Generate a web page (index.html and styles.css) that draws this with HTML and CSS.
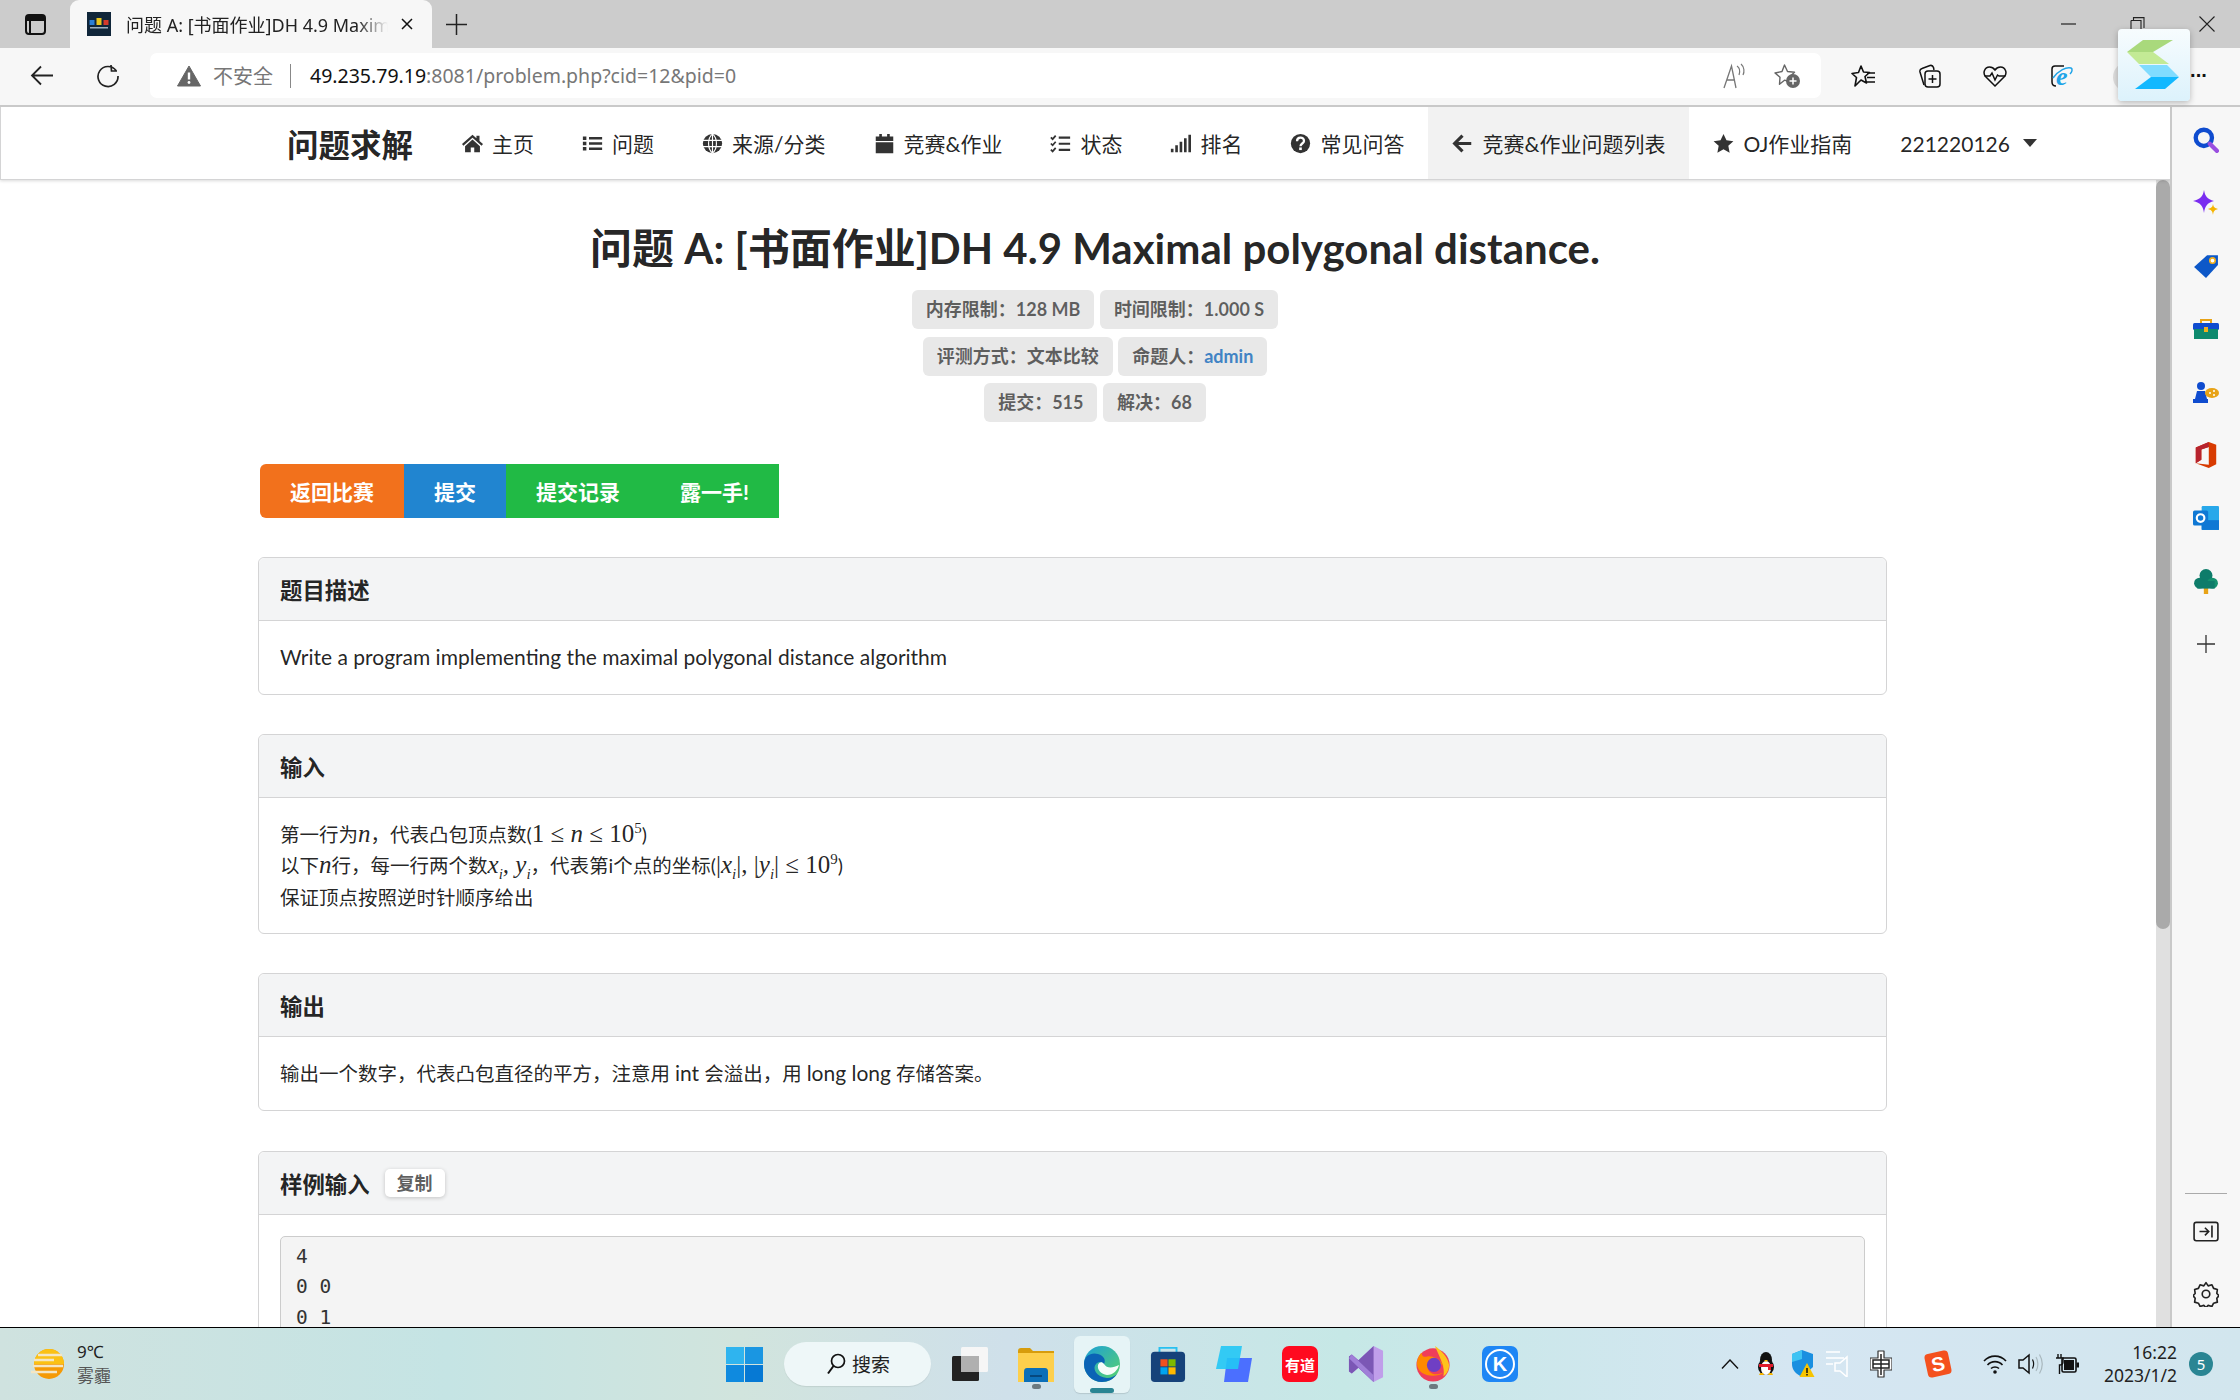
FILE: index.html
```html
<!DOCTYPE html>
<html lang="zh-CN">
<head>
<meta charset="utf-8">
<title>问题 A: [书面作业]DH 4.9 Maximal polygonal distance.</title>
<link rel="stylesheet" href="styles.css">
</head>
<body>
<div class="screen">
  <header class="tabstrip">
    <svg class="i tabs-ic" viewBox="0 0 21 21"><rect x="1" y="1" width="19" height="19" rx="3" fill="none" stroke="#111" stroke-width="2"/><path d="M1 6h19M5 6v14" stroke="#111" stroke-width="2" fill="none"/><rect x="1" y="1" width="19" height="5" fill="#111"/></svg>
    <div class="tab">
      <svg class="i favicon" viewBox="0 0 24 24"><rect width="24" height="24" fill="#10263a"/><rect x="2.500" y="8" width="5" height="5" fill="#2b7fd6"/><rect x="9.500" y="6" width="5" height="7" fill="#e8c51e"/><rect x="16.500" y="8" width="5" height="5" fill="#d63a2b"/><rect x="3" y="15" width="18" height="1.500" fill="#9fb1c0"/></svg>
      <span class="tab-title">问题 A: [书面作业]DH 4.9 Maximal polygonal distance.</span>
      <svg class="i tab-x" viewBox="0 0 12 12"><path d="M1 1l10 10M11 1 1 11" stroke="#111" stroke-width="1.500"/></svg>
    </div>
    <svg class="i tab-plus" viewBox="0 0 21 21"><path d="M10.500 0v21M0 10.500h21" stroke="#222" stroke-width="1.500"/></svg>
    <div class="winctl">
      <svg class="i win-min" viewBox="0 0 15 2"><path d="M0 1h15" stroke="#222" stroke-width="1.200"/></svg>
      <svg class="i win-max" viewBox="0 0 15 14"><path d="M1 3.500h10v10.500M1 3.500v10.500M3.500 3V.6h10.500V11" fill="none" stroke="#222" stroke-width="1.100"/></svg>
      <svg class="i win-x" viewBox="0 0 16 16"><path d="M.5.5l15 15M15.500.5l-15 15" stroke="#222" stroke-width="1.100"/></svg>
    </div>
  </header>

  <div class="toolbar">
    <svg class="i tb-back" viewBox="0 0 24 21"><path d="M23 10.500H2M11 1.500l-9 9 9 9" fill="none" stroke="#222" stroke-width="1.800"/></svg>
    <svg class="i tb-reload" viewBox="0 0 24 24"><path d="M20 6.500A10 10 0 1 0 22 12M15 1l.5 6H21" fill="none" stroke="#222" stroke-width="1.700"/></svg>
    <div class="addr">
      <svg class="i warn" viewBox="0 0 24 22"><path d="M12 1 23.500 21H.5z" fill="#666" stroke="#666" stroke-linejoin="round"/><path d="M12 7.500v7" stroke="#fff" stroke-width="2.400"/><circle cx="12" cy="17.500" r="1.400" fill="#fff"/></svg>
      <span class="insecure">不安全</span>
      <span class="addr-sep"></span>
      <span class="url"><span class="url-host">49.235.79.19</span>:8081/problem.php?cid=12&amp;pid=0</span>
      <svg class="i addr-read" viewBox="0 0 24 26"><path d="M2 25 9.500 3 14 25M5 17h8" fill="none" stroke="#777" stroke-width="1.300"/><path d="M15 3c3 2 3 6 2 9M19 1c3.500 3 3.500 8 2 11" fill="none" stroke="#777" stroke-width="1.200"/></svg>
      <svg class="i addr-fav" viewBox="0 0 26 25"><path d="M10.500 2l3 6.500 7 .8-5 4.700 1 5-6-1.800-5 4 .5-7L1 10l7-1.500z" fill="none" stroke="#666" stroke-width="1.400" stroke-linejoin="round"/><circle cx="19" cy="18" r="7" fill="#666"/><path d="M19 14.500v7M15.500 18h7" stroke="#fff" stroke-width="1.500"/></svg>
    </div>
    <svg class="i tb-favs" viewBox="0 0 25 24"><path d="M10 2l2.500 6 6 .5-4.500 4 1.500 6.500L10 16l-6 6 1.500-8.500L1 9.500l6.500-1z" fill="none" stroke="#111" stroke-width="1.600" stroke-linejoin="round"/><path d="M16 9h8M16 13.500h8M16 18h8" stroke="#111" stroke-width="1.500"/></svg>
    <svg class="i tb-coll" viewBox="0 0 24 24"><path d="M7 21 3 8c-.5-2 .5-3 2-3.500L13 1.500c2-.5 3 .5 3.500 2L17 6" fill="none" stroke="#111" stroke-width="1.500"/><rect x="8" y="7" width="15" height="16" rx="3" fill="#f7f7f7" stroke="#111" stroke-width="1.500"/><path d="M15.500 11v8M11.500 15h8" stroke="#111" stroke-width="1.500"/></svg>
    <svg class="i tb-heart" viewBox="0 0 24 22"><path d="M12 21 2.500 11.500C-.5 8 1.500 2 6.500 2c2.500 0 4.300 1.300 5.500 3 1.200-1.700 3-3 5.500-3 5 0 7 6 4 9.500z" fill="none" stroke="#111" stroke-width="1.500"/><path d="M1.500 11H7l2-3 3 7 2.500-5 1.500 1h6.500" fill="none" stroke="#111" stroke-width="1.500"/></svg>
    <svg class="i tb-ie" viewBox="0 0 24 24"><path d="M6 22c-3 0-4-1-4-4V5c0-2 1-3 3-3h9" fill="none" stroke="#111" stroke-width="1.500"/><text x="6" y="21" class="ie-e">e</text><path d="M3 14c6-8 13-11 18-10 2 1 1 4-1 6" fill="none" stroke="#20a4e8" stroke-width="1.500"/></svg>
    <span class="more">···</span>
    <span class="avatar"></span>
    <div class="ext-pop">
      <svg class="i ext-logo" viewBox="0 0 72 72"><polygon points="25,11 55,11 35,23 9,23" fill="#a9d97c"/><polygon points="9,23 35,23 51,35 21,35" fill="#c3ea95"/><polygon points="21,36 49,36 61,48 33,48" fill="#80dcff"/><polygon points="33,48 61,48 47,60 17,60" fill="#12b8ff"/></svg>
    </div>
  </div>

  <div class="main">
    <div class="viewport">
      <nav class="navbar">
        <a class="brand">问题求解</a>
        <a class="nav-item"><svg class="i nav-ic" viewBox="0 0 24 24"><path d="M12 2 0 12.500 1.600 14.500 12 5.500l10.400 9 1.600-2-4-3.500V3h-3.500v3z"/><path d="M12 7.500 3.500 15v7H10v-5.500h4V22h6.500v-7z"/></svg>主页</a>
        <a class="nav-item"><svg class="i nav-ic" viewBox="0 0 24 24"><path d="M1 4h4v4H1zM1 10h4v4H1zM1 16h4v4H1zM8 4.500h15v3H8zM8 10.500h15v3H8zM8 16.500h15v3H8z"/></svg>问题</a>
        <a class="nav-item"><svg class="i nav-ic" viewBox="0 0 24 24"><circle cx="12" cy="12" r="11"/><path d="M1 8.500h22M1 15.500h22M12 1v22M12 1C6 6 6 18 12 23M12 1c6 5 6 17 0 22" fill="none" stroke="#fff" stroke-width="1.300"/></svg>来源/分类</a>
        <a class="nav-item"><svg class="i nav-ic" viewBox="0 0 24 24"><path d="M6 1h3v3h6V1h3v3h4v5H2V4h4zM2 10.500h20V23H2z"/></svg>竞赛&amp;作业</a>
        <a class="nav-item"><svg class="i nav-ic" viewBox="0 0 24 24"><path d="M1 5l2 2 3.500-4M1 12l2 2 3.500-4M1 19l2 2 3.500-4" fill="none" stroke="#333" stroke-width="2"/><path d="M10 4h13v2.500H10zM10 11h13v2.500H10zM10 18h13v2.500H10z"/></svg>状态</a>
        <a class="nav-item"><svg class="i nav-ic" viewBox="0 0 24 24"><path d="M1 18h3v4H1zM6 14h3v8H6zM11 10h3v12h-3zM16 6h3v16h-3zM21 2h3v20h-3z"/></svg>排名</a>
        <a class="nav-item"><svg class="i nav-ic" viewBox="0 0 24 24"><circle cx="12" cy="12" r="11"/><path d="M8 9.500c0-5.500 8-5.500 8-.5 0 3-4 3-4 6" fill="none" stroke="#fff" stroke-width="2.600"/><rect x="10.500" y="16.500" width="3" height="3" fill="#fff"/></svg>常见问答</a>
        <a class="nav-item nav-active"><svg class="i nav-ic" viewBox="0 0 24 24"><path d="M22 12H4M12 3l-9 9 9 9" fill="none" stroke="#333" stroke-width="3.600"/></svg>竞赛&amp;作业问题列表</a>
        <a class="nav-item"><svg class="i nav-ic" viewBox="0 0 24 24"><path d="M12 1l3.400 7.300 7.900 1-5.800 5.400 1.500 7.900-7-3.900-7 3.900 1.500-7.900L.7 9.300l7.900-1z"/></svg>OJ作业指南</a>
        <a class="nav-item nav-user">221220126<span class="caret"></span></a>
      </nav>
      <div class="scrollarea">
        <main class="page">
          <div class="head">
            <h1 class="title">问题 A: [书面作业]DH 4.9 Maximal polygonal distance.</h1>
            <div class="label-row"><span class="label">内存限制：128 MB</span><span class="label">时间限制：1.000 S</span></div>
            <div class="label-row"><span class="label">评测方式：文本比较</span><span class="label">命题人：<a class="label-link">admin</a></span></div>
            <div class="label-row"><span class="label">提交：515</span><span class="label">解决：68</span></div>
          </div>
          <div class="btns">
            <a class="btn btn-orange">返回比赛</a><a class="btn btn-blue">提交</a><a class="btn btn-green">提交记录</a><a class="btn btn-green">露一手!</a>
          </div>
          <section class="panel">
            <h2 class="panel-head">题目描述</h2>
            <div class="panel-body"><span class="latin">Write a program implementing the maximal polygonal distance algorithm</span></div>
          </section>
          <section class="panel">
            <h2 class="panel-head">输入</h2>
            <div class="panel-body panel-lines">
              <div>第一行为<span class="m mi">n</span>，代表凸包顶点数(<span class="m">1 ≤ <span class="mi">n</span> ≤ 10<sup class="msup">5</sup></span>)</div>
              <div>以下<span class="m mi">n</span>行，每一行两个数<span class="m mi">x<sub class="msub">i</sub>, y<sub class="msub">i</sub></span>，代表第i个点的坐标(<span class="m">|<span class="mi">x<sub class="msub">i</sub></span>|, |<span class="mi">y<sub class="msub">i</sub></span>| ≤ 10<sup class="msup">9</sup></span>)</div>
              <div>保证顶点按照逆时针顺序给出</div>
            </div>
          </section>
          <section class="panel">
            <h2 class="panel-head">输出</h2>
            <div class="panel-body">输出一个数字，代表凸包直径的平方，注意用 <span class="latin">int</span> 会溢出，用 <span class="latin">long long</span> 存储答案。</div>
          </section>
          <section class="panel">
            <h2 class="panel-head">样例输入<span class="copy">复制</span></h2>
            <div class="panel-body"><pre class="code">4
0 0
0 1
1 1
1 0</pre></div>
          </section>
        </main>
        <div class="scrollbar"><div class="thumb"></div></div>
      </div>
    </div>
    <aside class="sidebar">
      <span class="side-cell"><svg class="i side-ic" viewBox="0 0 24 24"><circle cx="10" cy="10" r="7.500" fill="none" stroke="#0f4ccf" stroke-width="4"/><path d="M15.500 15.500 22 22" stroke="#9a4fe0" stroke-width="4" stroke-linecap="round"/></svg></span>
      <span class="side-cell"><svg class="i side-ic" viewBox="0 0 26 26"><path d="M11 0c1 6 3 9 10 11-7 2-9 5-10 12-1-7-3-10-11-12C8 9 10 6 11 0z" fill="#7a2cf0"/><path d="M20 14c.5 3 1.500 4 5 5-3.500 1-4.500 2-5 6-.5-4-1.500-5-5-6 3.500-1 4.500-2 5-5z" fill="#f5b400"/></svg></span>
      <span class="side-cell"><svg class="i side-ic" viewBox="0 0 24 24"><path d="M1 13 13 2h10v9L12 23z" fill="#0d58c8"/><circle cx="18" cy="7" r="2.500" fill="#fff" stroke="#f2b01e" stroke-width="1.500"/></svg></span>
      <span class="side-cell"><svg class="i side-ic" viewBox="0 0 26 20"><path d="M8 5V1h10v4" fill="none" stroke="#e8a317" stroke-width="2"/><rect y="4" width="26" height="7" rx="1.500" fill="#0f4ccf"/><rect x="1" y="10" width="24" height="10" fill="#0e8a6e"/><rect x="11" y="8" width="4" height="5" fill="#f2b01e"/></svg></span>
      <span class="side-cell"><svg class="i side-ic" viewBox="0 0 26 22"><circle cx="8" cy="5" r="4" fill="#0f4ccf"/><path d="M4 10h8l2 8H2zM0 18h15v4H0z" fill="#0f4ccf"/><ellipse cx="19" cy="12" rx="7" ry="5" fill="#e8a317"/><circle cx="17" cy="12" r="1" fill="#fff"/><circle cx="21" cy="10" r="1" fill="#fff"/><circle cx="21" cy="14" r="1" fill="#fff"/></svg></span>
      <span class="side-cell"><svg class="i side-ic" viewBox="0 0 24 28"><path d="M1 6 15 0l8 3v21l-8 4L1 23l14 1.500V5.500L7 8v11l-6 4z" fill="#d83b01"/><path d="M1 6 15 0v5.500L7 8v11l-6 4z" fill="#b7232e"/></svg></span>
      <span class="side-cell"><svg class="i side-ic" viewBox="0 0 24 24"><rect x="8" y="1" width="16" height="22" rx="1" fill="#28a8ea"/><path d="M8 14h16v9H8z" fill="#0f78d4"/><rect y="5" width="14" height="14" rx="1.500" fill="#0f78d4"/><circle cx="7" cy="12" r="3.500" fill="none" stroke="#fff" stroke-width="2"/></svg></span>
      <span class="side-cell"><svg class="i side-ic" viewBox="0 0 24 24"><rect x="10" y="18" width="4" height="6" fill="#e8a317"/><circle cx="12" cy="7" r="6" fill="#0e7c6a"/><circle cx="6" cy="14" r="5" fill="#0e7c6a"/><circle cx="18" cy="14" r="5" fill="#15916f"/><rect x="4" y="12" width="16" height="7" fill="#0e7c6a"/></svg></span>
      <span class="side-cell"><svg class="i side-plus" viewBox="0 0 18 18"><path d="M9 0v18M0 9h18" stroke="#333" stroke-width="1.300"/></svg></span>
      <div class="side-bottom">
        <span class="side-line"></span>
        <span class="side-cell"><svg class="i side-ic" viewBox="0 0 24 24"><rect x="1" y="4" width="22" height="17" rx="2" fill="none" stroke="#222" stroke-width="1.500"/><path d="M6 12.500h8M11 9l3.500 3.500L11 16M17.500 7v11" fill="none" stroke="#222" stroke-width="1.500"/></svg></span>
        <span class="side-cell"><svg class="i side-ic" viewBox="0 0 24 24"><circle cx="12" cy="12" r="3.500" fill="none" stroke="#222" stroke-width="1.500"/><path d="M12 1.500l2 3 3.500-1 1.500 3.300 3.500 1-.5 3.700 2 2-2 2.500.5 3.500-3.500 1-1.500 3-3.500-1-2 2-2-2-3.500 1-1.500-3-3.500-1 .5-3.500-2-2.500 2-2-.5-3.700 3.500-1L6.500 3.500l3.500 1z" fill="none" stroke="#222" stroke-width="1.500" stroke-linejoin="round"/></svg></span>
      </div>
    </aside>
  </div>

  <footer class="taskbar">
    <div class="weather">
      <svg class="i weather-ic" viewBox="0 0 36 30"><ellipse cx="19" cy="15" rx="15" ry="15" fill="#f59a06"/><path d="M19 0a15 15 0 0 1 15 15H4A15 15 0 0 1 19 0z" fill="#fbc113"/><path d="M8 6h24M4 11h20M3 17h30M1 23h26" stroke="#f4e6c4" stroke-width="2.400"/></svg>
      <div class="weather-text"><span>9℃</span><span class="weather-sub">雾霾</span></div>
    </div>
    <svg class="i t-win" viewBox="0 0 37 35"><rect width="18" height="17" fill="#2fb4ef"/><rect x="19" width="18" height="17" fill="#1a96e2"/><rect y="18" width="18" height="17" fill="#0f8adf"/><rect x="19" y="18" width="18" height="17" fill="#0679d4"/></svg>
    <div class="search"><svg class="i search-ic" viewBox="0 0 20 22"><circle cx="12" cy="8" r="6.500" fill="none" stroke="#111" stroke-width="1.700"/><path d="M7.500 13 2 20.500" stroke="#111" stroke-width="2"/></svg>搜索</div>
    <svg class="i t-view" viewBox="0 0 36 34"><rect y="9" width="27" height="25" rx="1.500" fill="#222"/><rect x="9" width="27" height="25" rx="1.500" fill="#f6f6f6"/><rect x="9" y="9" width="18" height="16" fill="#b0b0b0"/></svg>
    <span class="app app-folder app-run"><svg class="i app-ic" viewBox="0 0 36 36"><path d="M0 5c0-2 1-3 3-3h9l3 3h21v4H0z" fill="#d79c0c"/><path d="M0 7h36v29H0z" fill="#fdcf4c"/><path d="M6 26c0-3 1-4 3-4h18c2 0 3 1 3 4v10H6z" fill="#0b6fb8"/><path d="M12 30h12" stroke="#06487e" stroke-width="2"/></svg></span>
    <span class="app app-edge"><svg class="i app-ic" viewBox="0 0 36 36"><defs><linearGradient id="edgeg" x1="0" y1="0" x2="1" y2="1"><stop offset="0" stop-color="#1b9fd8"/><stop offset="1" stop-color="#5ad46a"/></linearGradient></defs><circle cx="18" cy="18" r="18" fill="url(#edgeg)"/><path d="M0 18C0 9 8 6 14 8c6 2 8 6 6 10-2-2-5-3-8 0-4 4 0 13 11 14 4 0 8-2 10-4-3 5-9 8-15 8C8 36 0 28 0 18z" fill="#0b63b5"/><path d="M20 18c3 5 9 4 15 1-1 5-6 10-12 10-6-1-10-5-9-10 1-3 4-4 6-1z" fill="#fff" opacity=".95"/></svg></span>
    <svg class="i app-ic t-store" viewBox="0 0 36 38"><path d="M9 8V2h18v6" fill="none" stroke="#28c0f0" stroke-width="2"/><rect y="6" width="36" height="32" rx="4" fill="#16427a"/><rect x="10" y="14" width="7.500" height="7.500" fill="#f2501f"/><rect x="18.500" y="14" width="7.500" height="7.500" fill="#7fb900"/><rect x="10" y="22.500" width="7.500" height="7.500" fill="#00a4ef"/><rect x="18.500" y="22.500" width="7.500" height="7.500" fill="#ffb900"/></svg>
    <svg class="i app-ic t-note" viewBox="0 0 36 36"><path d="M11 12h25l-4 24H8z" fill="#4b6fff"/><path d="M5 0h21l-4 23H0z" fill="#22c7f5" opacity=".9"/></svg>
    <span class="app-box t-youdao">有道</span>
    <svg class="i app-ic t-vs" viewBox="0 0 36 38"><path d="M26 0 36 5v28l-10 5-16-15-7 6-3-2V11l3-2 7 6z" fill="#c09eea"/><path d="M26 0v38l-16-15-7 6-3-2V11l3-2 7 6z" fill="#7b57b5"/><path d="M3 9 26 31v7L0 13z" fill="#a07fd8"/></svg>
    <span class="app app-ff app-run"><svg class="i app-ic" viewBox="0 0 36 38"><circle cx="18" cy="20" r="17.500" fill="#ef3e5a"/><path d="M20 0c6 4 14 12 15 20 0 6-3 10-6 12 2-10-3-18-9-32z" fill="#ffc21c"/><path d="M1 18C2 10 6 7 6 7c0 4 3 5 6 4 6-1 14 3 17 10-6-5-14-5-16 0-2 6 6 12 16 7-7 6-28 5-28-10z" fill="#ff8a00"/><circle cx="19" cy="20" r="7.500" fill="#6f3fc4"/></svg></span>
    <span class="app-box t-k"><span class="k-ring">K</span></span>

    <svg class="i t-chev" viewBox="0 0 18 10"><path d="M1 9.500 9 1l8 8.500" fill="none" stroke="#111" stroke-width="1.400"/></svg>
    <svg class="i t-qq" viewBox="0 0 20 24"><ellipse cx="10" cy="8" rx="6" ry="8" fill="#111"/><ellipse cx="10" cy="15" rx="8" ry="8" fill="#111"/><ellipse cx="10" cy="16" rx="5" ry="7" fill="#fff"/><path d="M3 12h14v3H3z" fill="#e01b2b"/><path d="M12 13h3v5h-3z" fill="#e01b2b"/><path d="M8 8h4l-2 2z" fill="#f5b400"/><path d="M3 23h5l-1-2H4zM12 23h5l-1-2h-3z" fill="#f5b400"/></svg>
    <svg class="i t-shield" viewBox="0 0 24 28"><path d="M11 0 1 4v10c0 6 4 10 10 13l11-10V4z" fill="#1a8fe0"/><path d="M11 0 1 4v8l10-3z" fill="#3fc3f3"/><path d="M16 13l7.500 14h-15z" fill="#f7c400"/><path d="M16 18v5M16 24v1.500" stroke="#111" stroke-width="1.500"/></svg>
    <svg class="i t-notify" viewBox="0 0 24 26"><path d="M0 1h14M0 7h18M0 13h7" stroke="#fff" stroke-width="1.600"/><path d="M9 12h5l7-6v20l-7-6H9z" fill="none" stroke="#fff" stroke-width="1.500"/></svg>
    <svg class="i t-zh" viewBox="0 0 22 28"><path d="M8 1h6v7h8v12h-8v7H8v-7H0V8h8z" fill="#fff" stroke="#333" stroke-width="1.200" stroke-linejoin="round"/><path d="M3 10h16v8H3zM11 4v21M3 14h16" fill="none" stroke="#222" stroke-width="1.500"/></svg>
    <span class="t-sogou">S</span>
    <svg class="i t-wifi" viewBox="0 0 24 20"><path d="M1 7c6-6.500 16-6.500 22 0M4.500 11c4-4.500 11-4.500 15 0M8 14.500c2.200-2 5.800-2 8 0" fill="none" stroke="#111" stroke-width="1.600"/><circle cx="12" cy="18" r="1.800" fill="#111"/></svg>
    <svg class="i t-sound" viewBox="0 0 25 22"><path d="M1 7h4l6-5v18l-6-5H1z" fill="none" stroke="#111" stroke-width="1.500"/><path d="M14.500 6.500c1.500 3 1.500 6 0 9" fill="none" stroke="#111" stroke-width="1.200"/><path d="M18 4c2.500 4 2.500 10 0 14M21.500 1.500c3.500 6 3.500 13 0 19" fill="none" stroke="#a9b8be" stroke-width="1.200"/></svg>
    <svg class="i t-batt" viewBox="0 0 24 20"><path d="M3 0v4M6 0v4M1 4h7v4c0 2-1 3-3.500 3V20" fill="none" stroke="#111" stroke-width="1.400"/><rect x="7" y="4" width="14" height="14" rx="1.500" fill="none" stroke="#111" stroke-width="1.600"/><rect x="9" y="6" width="10" height="10" fill="#111"/><rect x="21.500" y="8.500" width="2.500" height="5" fill="#111"/></svg>
    <div class="clock"><span>16:22</span><span>2023/1/2</span></div>
    <span class="badge">5</span>
  </footer>
</div>
</body>
</html>
```
FILE: styles.css
```css
* { box-sizing: border-box; }
html, body { margin: 0; padding: 0; }
body { background: #fff; font-family: Lato, "Noto Sans CJK SC", sans-serif; color: rgba(0,0,0,.87); }
a { color: inherit; text-decoration: none; }
.i { display: block; flex: none; }
.screen { width: 2240px; height: 1400px; display: flex; flex-direction: column; overflow: hidden; position: relative; }

/* tab strip */
.tabstrip { height: 48px; flex: none; background: #cccccc; display: flex; align-items: center; padding-left: 25px; font-family: "Noto Sans", "Noto Sans CJK SC", sans-serif; }
.tabs-ic { width: 21px; height: 21px; }
.tab { margin-left: 24px; width: 362px; height: 48px; background: #f7f7f7; border-radius: 9px 9px 0 0; display: flex; align-items: center; padding-left: 17px; color: #222; font-size: 18px; align-self: flex-end; }
.favicon { width: 24px; height: 24px; }
.tab-title { margin-left: 15px; width: 262px; white-space: nowrap; overflow: hidden; -webkit-mask-image: linear-gradient(90deg,#000 88%,transparent); mask-image: linear-gradient(90deg,#000 88%,transparent); }
.tab-x { width: 12px; height: 12px; margin-left: 13px; }
.tab-plus { width: 21px; height: 21px; margin-left: 14px; }
.winctl { margin-left: auto; display: flex; align-items: center; padding-right: 25px; }
.win-min { width: 15px; height: 2px; }
.win-max { width: 15px; height: 14px; margin-left: 54px; }
.win-x { width: 16px; height: 16px; margin-left: 54px; }

/* toolbar */
.toolbar { height: 59px; flex: none; background: #f7f7f7; border-bottom: 2px solid #c9c9c9; display: flex; align-items: center; padding-left: 30px; padding-bottom: 2px; position: relative; }
.tb-back { width: 24px; height: 21px; }
.tb-reload { width: 24px; height: 24px; margin-left: 42px; }
.addr { width: 1671px; height: 45px; margin-left: 30px; background: #fff; border-radius: 7px; display: flex; align-items: center; padding: 0 21px 0 27px; font-family: "Noto Sans", "Noto Sans CJK SC", sans-serif; font-size: 20px; }
.warn { width: 24px; height: 22px; }
.insecure { margin-left: 12px; color: #777; white-space: nowrap; }
.addr-sep { width: 1px; height: 24px; background: #888; margin-left: 17px; }
.url { margin-left: 19px; color: #777; white-space: nowrap; font-size: 19.500px; }
.url-host { color: #111; }
.addr-read { width: 24px; height: 26px; margin-left: auto; }
.addr-fav { width: 26px; height: 25px; margin-left: 28px; }
.tb-favs { width: 25px; height: 24px; margin-left: 30px; }
.tb-coll { width: 24px; height: 24px; margin-left: 41px; }
.tb-heart { width: 24px; height: 22px; margin-left: 42px; }
.tb-ie { width: 24px; height: 24px; margin-left: 43px; }
.ie-e { font-family: "Liberation Serif", serif; font-size: 26px; font-weight: 700; font-style: italic; fill: #20a4e8; }
.more { margin-left: 116px; font-size: 20px; font-weight: 700; letter-spacing: -1px; color: #111; font-family: "Liberation Sans", sans-serif; white-space: nowrap; }
.avatar { position: absolute; left: 2113px; top: 14px; width: 30px; height: 30px; border-radius: 50%; background: #ddd; }
.ext-pop { position: absolute; left: 2118px; top: -19px; width: 72px; height: 72px; background: linear-gradient(180deg,#f7fcfe,#dcf2fc); border-radius: 4px; box-shadow: 0 2px 6px rgba(0,0,0,.25); }
.ext-logo { width: 72px; height: 72px; }

/* main area */
.main { height: 1220px; flex: none; display: flex; }
.viewport { width: 2172px; flex: none; display: flex; flex-direction: column; border-right: 2px solid #c9c9c9; overflow: hidden; }
.navbar { height: 73px; flex: none; display: flex; align-items: stretch; padding-left: 262px; background: #fff; border-left: 1px solid #d4d4d5; border-bottom: 1px solid #d4d4d5; box-shadow: 0 1px 3px rgba(0,0,0,.15); position: relative; font-size: 21px; }
.brand { display: flex; align-items: center; padding: 0 24px; font-size: 31.500px; font-weight: 700; width: 175px; white-space: nowrap; }
.nav-item { display: flex; align-items: center; padding: 0 24px; white-space: nowrap; color: rgba(0,0,0,.87); }
.nav-active { background: #f2f2f2; }
.nav-ic { width: 21px; height: 21px; margin-right: 9px; fill: #333; }
.nav-user { padding-left: 24px; }
.caret { width: 0; height: 0; margin-left: 13px; border-left: 7px solid transparent; border-right: 7px solid transparent; border-top: 8px solid #333; }

.scrollarea { flex: 1; min-height: 0; display: flex; }
.page { width: 2156px; flex: none; padding: 0 269px 0 258px; overflow: hidden; font-size: 21px; }
.scrollbar { flex: 1; background: #e0e0e0; }
.thumb { height: 749px; background: #aaaaaa; border-radius: 8px; }

.head { margin-right: -45px; display: flex; flex-direction: column; align-items: center; padding-top: 42px; }
.title { margin: 0 0 16px; font-size: 42px; line-height: 52px; font-weight: 700; white-space: nowrap; }
.label-row { display: flex; justify-content: center; gap: 5.500px; margin-bottom: 7.500px; }
.label { display: block; height: 39px; line-height: 39px; padding: 0 14px; background: #e8e8e8; border-radius: 6px; font-size: 18px; font-weight: 700; color: rgba(0,0,0,.6); white-space: nowrap; }
.label-link { color: #4183c4; }

.btns { display: flex; margin: 34px 0 39px 2px; width: 532px; height: 54px; border-radius: 6px; overflow: hidden; }
.btn { display: flex; align-items: center; padding: 0 30px; color: #fff; font-weight: 700; font-size: 21px; white-space: nowrap; }
.btn-orange { background: #f2711c; }
.btn-blue { background: #2185d0; }
.btn-green { background: #21ba45; }

.panel { border: 1px solid #d4d4d5; border-radius: 6px; margin-bottom: 39.500px; background: #fff; }
.panel-head { margin: 0; height: 63px; padding: 0 21px; display: flex; align-items: center; background: #f3f4f5; border-bottom: 1px solid #d4d4d5; border-radius: 6px 6px 0 0; font-size: 22.400px; font-weight: 700; }
.panel-body { padding: 21px; font-size: 19.500px; line-height: 30px; }
.panel-lines { line-height: 31.300px; padding-bottom: 20px; }
.panel-lines > div { height: 31.300px; white-space: nowrap; }
.latin { font-size: 21px; }
.m { font-family: "Liberation Serif", serif; font-size: 25px; line-height: 1; }
.mi { font-style: italic; }
.msup { font-size: 15px; line-height: 0; }
.msub { font-size: 15px; line-height: 0; }
.copy { margin-left: 15px; display: block; padding: 0 12px; height: 28px; line-height: 28px; background: #fff; border-radius: 5px; box-shadow: 0 1px 4px rgba(0,0,0,.2); font-size: 18px; color: rgba(0,0,0,.65); }
.code { margin: 0; padding: 4px 15px 14px; border: 1px solid #ccc; border-radius: 5px; background: #f4f4f4; font-family: "DejaVu Sans Mono", monospace; font-size: 19.500px; line-height: 30.600px; color: #333; }
.code { padding-top: 5px; }

/* sidebar */
.sidebar { flex: 1; background: #f7f7f7; display: flex; flex-direction: column; align-items: center; padding: 1px 0 2px; }
.side-cell { height: 63px; width: 100%; display: flex; align-items: center; justify-content: center; flex: none; }
.side-ic { width: 26px; height: 26px; }
.side-plus { width: 18px; height: 18px; }
.side-bottom { margin-top: auto; width: 100%; display: flex; flex-direction: column; align-items: center; }
.side-line { width: 42px; height: 1px; background: #aaa; margin-bottom: 5px; }

/* taskbar */
.taskbar { flex: 1; display: flex; align-items: center; border-top: 1px solid #000; background: linear-gradient(90deg,#cfe2df 0,#c5e4e4 20%,#d1e4dd 33%,#cfe0ea 45%,#c6e8e6 60%,#d5e6f2 80%,#d2e6ee 100%); font-family: "Noto Sans", "Noto Sans CJK SC", sans-serif; color: #222; }
.weather { width: 726px; padding-left: 30px; display: flex; align-items: center; flex: none; }
.weather-ic { width: 36px; height: 30px; }
.weather-text { margin-left: 11px; display: flex; flex-direction: column; font-size: 17px; line-height: 24px; }
.weather-sub { color: #555; }
.t-win { width: 37px; height: 35px; }
.search { margin-left: 21px; width: 147px; height: 44px; border-radius: 22px; background: #eef7f8; display: flex; align-items: center; padding-left: 42px; font-size: 19px; color: #222; box-shadow: 0 1px 1px rgba(0,0,0,.08); white-space: nowrap; }
.search-ic { width: 20px; height: 22px; margin-right: 6px; }
.t-view { width: 36px; height: 34px; margin-left: 21px; }
.app { display: block; position: relative; flex: none; }
.app-ic { width: 36px; height: 36px; }
.app-folder { margin-left: 30px; }
.app-run::after { content: ""; position: absolute; left: 14px; bottom: -7px; width: 9px; height: 5px; border-radius: 3px; background: #6c7a80; }
.app-edge { margin-left: 20px; width: 56px; height: 57px; border-radius: 6px; background: #e6f4f6; box-shadow: 0 1px 1px rgba(0,0,0,.12); padding: 10px 10px 0; }
.app-edge::after { content: ""; position: absolute; left: 16px; bottom: 0; width: 24px; height: 5px; border-radius: 3px; background: #2a8593; }
.t-store { margin-left: 20px; }
.t-note { margin-left: 30px; }
.app-box { flex: none; width: 36px; height: 36px; border-radius: 7px; display: flex; align-items: center; justify-content: center; }
.t-youdao { margin-left: 30px; background: #ff0a1f; color: #fff; font-size: 15px; font-weight: 700; white-space: nowrap; }
.t-vs { margin-left: 30px; }
.app-ff { margin-left: 31px; }
.t-k { margin-left: 31px; background: #1e86f5; }
.k-ring { width: 30px; height: 30px; border: 2px solid #fff; border-radius: 50%; color: #fff; font-size: 20px; font-weight: 700; line-height: 26px; text-align: center; font-family: "Liberation Sans", sans-serif; }
.t-chev { width: 18px; height: 10px; margin-left: 203px; }
.t-qq { width: 20px; height: 24px; margin-left: 17px; }
.t-shield { width: 24px; height: 28px; margin-left: 15px; }
.t-notify { width: 24px; height: 26px; margin-left: 11px; }
.t-zh { width: 22px; height: 28px; margin-left: 20px; }
.t-sogou { flex: none; width: 24px; height: 24px; margin-left: 34px; background: #f4511e; color: #fff; font-size: 20px; font-weight: 700; line-height: 24px; text-align: center; border-radius: 4px; transform: rotate(-12deg); font-family: "Liberation Sans", sans-serif; }
.t-wifi { width: 24px; height: 20px; margin-left: 33px; }
.t-sound { width: 25px; height: 22px; margin-left: 11px; }
.t-batt { width: 24px; height: 20px; margin-left: 12px; }
.clock { margin-left: 27px; width: 71px; display: flex; flex-direction: column; align-items: flex-end; font-size: 17.500px; line-height: 23px; white-space: nowrap; }
.badge { flex: none; margin-left: 12px; width: 24px; height: 24px; border-radius: 50%; background: #2a8593; color: #fff; font-size: 15px; line-height: 24px; text-align: center; }
```
